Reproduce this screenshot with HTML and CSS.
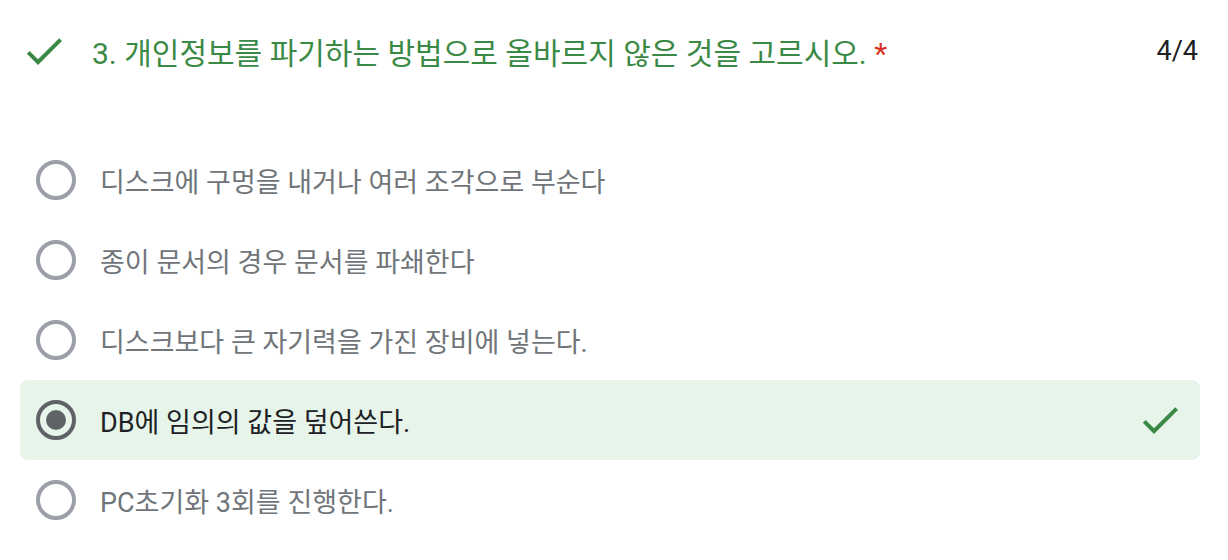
FILE: index.html
```html
<!DOCTYPE html>
<html lang="ko">
<head>
    <meta charset="utf-8" />
    <meta name="viewport" content="width=device-width, initial-scale=1" />
    <title>퀴즈 결과</title>
    <link rel="stylesheet" href="styles.css">
</head>
<body>
    <div class="question">
        <div class="question-header">
            <svg class="check-icon" viewBox="0 0 24 24" width="48" height="48">
                <path d="M9 16.17L4.83 12l-1.42 1.41L9 19 21 7l-1.41-1.41z" />
            </svg>
            <h1 class="question-title">3. 개인정보를 파기하는 방법으로 올바르지 않은 것을 고르시오. <span class="required">*</span></h1>
            <span class="score">4/4</span>
        </div>

        <div class="options">
            <div class="option">
                <span class="radio"></span>
                <span class="option-text">디스크에 구멍을 내거나 여러 조각으로 부순다</span>
            </div>
            <div class="option">
                <span class="radio"></span>
                <span class="option-text">종이 문서의 경우 문서를 파쇄한다</span>
            </div>
            <div class="option">
                <span class="radio"></span>
                <span class="option-text">디스크보다 큰 자기력을 가진 장비에 넣는다.</span>
            </div>
            <div class="option option-correct">
                <span class="radio radio-checked"></span>
                <span class="option-text">DB에 임의의 값을 덮어쓴다.</span>
                <svg class="check-icon option-check" viewBox="0 0 24 24" width="48" height="48">
                    <path d="M9 16.17L4.83 12l-1.42 1.41L9 19 21 7l-1.41-1.41z" />
                </svg>
            </div>
            <div class="option">
                <span class="radio"></span>
                <span class="option-text">PC초기화 3회를 진행한다.</span>
            </div>
        </div>
    </div>
</body>
</html>
```

FILE: styles.css
```css
* {
    margin: 0;
    padding: 0;
    box-sizing: border-box;
}

body {
    font-family: Roboto, "Noto Sans CJK KR", sans-serif;
    background: #fff;
    color: #202124;
    width: 1228px;
    height: 560px;
    overflow: hidden;
}

.question {
    padding: 0 28px 0 20px;
}

.question-header {
    display: flex;
    align-items: center;
    height: 100px;
    padding-top: 2px;
}

.check-icon {
    flex: none;
    fill: #3a8a45;
}

.question-title {
    flex: 1;
    margin-left: 24px;
    font-size: 30px;
    font-weight: 400;
    color: #3a8a45;
}

.required {
    color: #d93025;
}

.score {
    font-size: 27px;
    color: #202124;
    margin-right: 2px;
}

.options {
    margin-top: 40px;
    width: 1180px;
}

.option {
    display: flex;
    align-items: center;
    height: 80px;
    padding: 0 16px;
    border-radius: 8px;
}

.option-correct {
    background: #e6f4ea;
}

.radio {
    flex: none;
    width: 40px;
    height: 40px;
    border: 4px solid #9aa0a6;
    border-radius: 50%;
    display: flex;
    align-items: center;
    justify-content: center;
}

.radio-checked {
    border-color: #5f6368;
}

.radio-checked::after {
    content: "";
    width: 20px;
    height: 20px;
    border-radius: 50%;
    background: #5f6368;
}

.option-text {
    flex: 1;
    margin-left: 24px;
    font-size: 27px;
    color: #70757a;
}

.option-correct .option-text {
    color: #202124;
}
```
